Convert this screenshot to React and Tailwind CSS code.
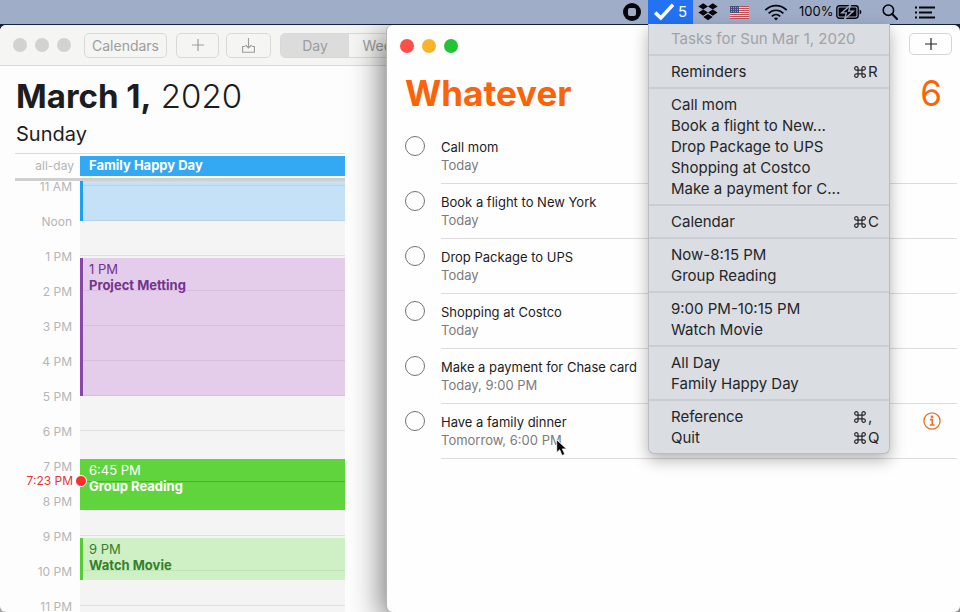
import React from "react";

const HOUR = 35;
const FIRST_HOUR = 11;

const hours = ["11 AM", "Noon", "1 PM", "2 PM", "3 PM", "4 PM", "5 PM", "6 PM", "7 PM", "8 PM", "9 PM", "10 PM", "11 PM"];

const events = [
  { start: 10.8, end: 12, tone: "bg-[#5ab5ff]/30 border-[#1da1f2]" },
  { start: 13, end: 17, time: "1 PM", title: "Project Metting", tone: "bg-[#c56fdc]/30 border-[#8a45a8] text-[#74338c]" },
  { start: 18.75, end: 20.25, time: "6:45 PM", title: "Group Reading", tone: "bg-[#5fd43d] border-[#5fd43d] text-white" },
  { start: 21, end: 22.25, time: "9 PM", title: "Watch Movie", tone: "bg-[#7fe35d]/30 border-[#55cc33] text-[#35802a]" },
];

const reminders = [
  { title: "Call mom", due: "Today" },
  { title: "Book a flight to New York", due: "Today" },
  { title: "Drop Package to UPS", due: "Today" },
  { title: "Shopping at Costco", due: "Today" },
  { title: "Make a payment for Chase card", due: "Today, 9:00 PM" },
  { title: "Have a family dinner", due: "Tomorrow, 6:00 PM", info: true },
];

const menuGroups = [
  [{ label: "Reminders", keys: "R" }],
  [
    { label: "Call mom" },
    { label: "Book a flight to New..." },
    { label: "Drop Package to UPS" },
    { label: "Shopping at Costco" },
    { label: "Make a payment for C..." },
  ],
  [{ label: "Calendar", keys: "C" }],
  [{ label: "Now-8:15 PM" }, { label: "Group Reading" }],
  [{ label: "9:00 PM-10:15 PM" }, { label: "Watch Movie" }],
  [{ label: "All Day" }, { label: "Family Happy Day" }],
  [{ label: "Reference", keys: "," }, { label: "Quit", keys: "Q" }],
];

function CommandIcon() {
  return (
    <svg className="h-3 w-3" viewBox="0 0 11 11" fill="none" stroke="currentColor" strokeWidth="1.1" aria-hidden="true">
      <path d="M3.7 3.7V2.2A1.55 1.55 0 1 0 2.2 3.7H8.8A1.55 1.55 0 1 0 7.3 2.2V8.8A1.55 1.55 0 1 0 8.8 7.3H2.2A1.55 1.55 0 1 0 3.7 8.8Z" />
    </svg>
  );
}

function DropboxIcon() {
  return (
    <svg className="h-[18px] w-5" viewBox="0 0 20 18" fill="#05070c" aria-hidden="true">
      <path d="M5.2 0.3 10 3.4 5.2 6.5 0.4 3.4ZM14.8 0.3 19.6 3.4 14.8 6.5 10 3.4ZM5.2 6.5 10 9.6 5.2 12.7 0.4 9.6ZM14.8 6.5 19.6 9.6 14.8 12.7 10 9.6ZM10 10.9 14.7 14 10 17.2 5.3 14Z" />
    </svg>
  );
}

function FlagIcon() {
  return (
    <svg className="h-[13px] w-[19px]" viewBox="0 0 19 13" aria-hidden="true">
      <rect width="19" height="13" fill="#e3d8dc" />
      {[0, 2, 4, 6, 8, 10, 12].map((y) => (
        <rect key={y} y={y} width="19" height="1" fill="#bf5058" />
      ))}
      <rect width="9" height="7" fill="#46507f" />
      {[1, 3, 5].map((y) =>
        [1, 3, 5, 7].map((x) => <rect key={`${x}-${y}`} x={x} y={y} width="0.8" height="0.8" fill="#c5c9dc" />)
      )}
    </svg>
  );
}

function WifiIcon() {
  return (
    <svg className="h-[17px] w-6" viewBox="0 0 24 17" fill="none" stroke="#05070c" strokeWidth="1.7" aria-hidden="true">
      <path d="M1.3 6.2C7.3 0.2 16.7 0.2 22.7 6.2" />
      <path d="M4.6 9.4C8.8 5.2 15.2 5.2 19.4 9.4" />
      <path d="M7.8 12.4C10.2 10 13.8 10 16.2 12.4" />
      <path d="M12 16.4 9.9 14.3Q12 12.7 14.1 14.3Z" fill="#05070c" stroke="none" />
    </svg>
  );
}

function BatteryIcon() {
  return (
    <svg className="h-[14px] w-[26px]" viewBox="0 0 26 14" aria-hidden="true">
      <rect x="0.8" y="0.8" width="21.4" height="12.4" rx="2.6" fill="none" stroke="#05070c" strokeWidth="1.4" />
      <rect x="2.6" y="2.6" width="17.8" height="8.8" rx="1" fill="#05070c" />
      <path d="M23.6 4.6Q25.4 5.4 25.4 7T23.6 9.4Z" fill="#05070c" />
      <path d="M14.6 0 5.6 7.9H10.4L8.6 14 17.4 6.1H12.6Z" fill="#05070c" stroke="#9fadc8" strokeWidth="1.3" />
    </svg>
  );
}

function SearchIcon() {
  return (
    <svg className="h-4 w-4" viewBox="0 0 16 16" fill="none" stroke="#05070c" strokeWidth="1.6" strokeLinecap="round" aria-hidden="true">
      <circle cx="6.4" cy="6.2" r="5.2" />
      <path d="M10.2 10 15 15" strokeWidth="2" />
    </svg>
  );
}

function ListIcon() {
  return (
    <svg className="h-[13px] w-5" viewBox="0 0 20 13" fill="#05070c" aria-hidden="true">
      <path d="M0 0.5H2V2.5H0ZM4 0.5H20V2.5H4ZM0 5.5H2V7.5H0ZM4 5.5H17V7.5H4ZM0 10.5H2V12.5H0ZM4 10.5H20V12.5H4Z" />
    </svg>
  );
}

function PlusIcon() {
  return (
    <svg className="h-3 w-3" viewBox="0 0 12 12" stroke="currentColor" strokeWidth="1.2" aria-hidden="true">
      <path d="M6 0V12M0 6H12" />
    </svg>
  );
}

function TasksMenu() {
  return (
    <div className="absolute left-0 top-full w-[242px] rounded-b-md border border-t-0 border-[#b9bdc1] bg-[#dadde1] pb-[5px] pt-1 text-[15px] leading-[21px] text-[#242629] shadow-[0_6px_16px_rgba(0,0,0,0.3)]">
      <p className="h-[21px] px-[22px] text-[#a0a3a7]">Tasks for Sun Mar 1, 2020</p>
      {menuGroups.map((group, i) => (
        <div key={i}>
          <div className="my-[5px] h-[2px] bg-[#cacdd1]" />
          {group.map((item) => (
            <button key={item.label} className="flex h-[21px] w-full items-center pl-[22px] pr-2 text-left">
              <span className="flex-1">{item.label}</span>
              {item.keys && (
                <span className="flex w-[27px] items-center gap-[2px]">
                  <CommandIcon />
                  {item.keys}
                </span>
              )}
            </button>
          ))}
        </div>
      ))}
    </div>
  );
}

function MenuBar() {
  return (
    <header className="relative z-20 flex h-6 shrink-0 items-center justify-end bg-[#9fadc8] pr-[25px] text-[#05070c]">
      <button aria-label="Stop recording" className="mr-[7px] flex h-[18px] w-[18px] items-center justify-center rounded-full bg-[#05070c]">
        <span className="h-2 w-2 rounded-[2px] bg-[#9fadc8]" />
      </button>
      <div className="relative h-6">
        <button className="flex h-6 w-[45px] items-center justify-center gap-1 bg-[#2372f3] text-[15px] text-white">
          <svg className="h-[18px] w-5" viewBox="0 0 20 18" fill="none" stroke="white" strokeWidth="3.6" aria-hidden="true">
            <path d="M1.2 9.6 6.8 15 19 1.6" />
          </svg>
          5
        </button>
        <TasksMenu />
      </div>
      <div className="ml-[5px] flex items-center">
        <DropboxIcon />
        <span className="ml-3 flex"><FlagIcon /></span>
        <span className="ml-[15px] flex"><WifiIcon /></span>
        <span className="ml-[11px] w-[34px] text-[13px]">100%</span>
        <span className="ml-[3px] flex"><BatteryIcon /></span>
        <button aria-label="Search" className="ml-5"><SearchIcon /></button>
        <button aria-label="Notifications" className="ml-[17px]"><ListIcon /></button>
      </div>
    </header>
  );
}

function CalendarWindow() {
  return (
    <section className="absolute inset-y-0 left-0 flex w-[560px] flex-col overflow-hidden rounded-md bg-[#fdfdfd]">
      <div className="flex h-[41px] shrink-0 items-center border-b border-[#d9d9d9] bg-[#f5f5f4] pl-[13px] text-[14px] text-[#9d9d9d]">
        <div className="flex gap-2">
          <span className="h-[14px] w-[14px] rounded-full bg-[#d2d2d2]" />
          <span className="h-[14px] w-[14px] rounded-full bg-[#d2d2d2]" />
          <span className="h-[14px] w-[14px] rounded-full bg-[#d2d2d2]" />
        </div>
        <button className="ml-[13px] h-[25px] w-[83px] rounded-[5px] border border-[#d9d9d9]">Calendars</button>
        <button aria-label="Add event" className="ml-[9px] flex h-[25px] w-[43px] items-center justify-center rounded-[5px] border border-[#d9d9d9]">
          <PlusIcon />
        </button>
        <button aria-label="Inbox" className="ml-[7px] flex h-[25px] w-[45px] items-center justify-center rounded-[5px] border border-[#d9d9d9]">
          <svg className="h-[15px] w-[13px]" viewBox="0 0 13 15" fill="none" stroke="currentColor" strokeWidth="1.1" aria-hidden="true">
            <path d="M3.2 8.5H0.6V14.2H12.4V8.5H9.8M6.5 0V10M3.5 7 6.5 10 9.5 7" />
          </svg>
        </button>
        <div className="ml-[9px] flex h-[25px] overflow-hidden rounded-[5px] border border-[#d9d9d9]">
          <button className="w-[68px] bg-[#dcdcdc]">Day</button>
          <button className="w-[64px]">Week</button>
        </div>
      </div>

      <div className="flex min-h-0 w-[345px] flex-1 flex-col text-[#1d1d1f]">
        <h1 className="mt-2 pl-4 text-[33px] leading-[44px]">
          <span className="font-bold">March 1,</span> <span className="font-light">2020</span>
        </h1>
        <p className="pl-4 text-[20px] leading-[32px]">Sunday</p>
        <div className="ml-[15px] mt-[3px] flex h-7 items-center border-b-[3px] border-t border-b-[#cfcfcf] border-t-[#dcdcdc] text-[12px]">
          <span className="w-[65px] pr-[6px] text-right text-[#b5b5b5]">all-day</span>
          <span className="h-5 flex-1 bg-[#33a9f4] pl-[9px] text-[13px] font-bold leading-[19px] text-white">Family Happy Day</span>
        </div>
        <div className="relative min-h-0 flex-1 overflow-hidden text-[12px]">
          <div className="-mt-3">
            {hours.map((label) => (
              <div key={label} className="flex h-[35px]">
                <span className="w-20 shrink-0 pr-2 text-right leading-[35px] text-[#b5b5b5]">{label}</span>
                <span className="flex flex-1 flex-col bg-[#f3f4f3]">
                  <span className="h-[17px] border-b border-[#dfe0df]" />
                </span>
              </div>
            ))}
          </div>
          {events.map((event) => (
            <article
              key={event.start}
              className={`absolute left-20 right-0 border-l-[3px] pl-[6px] pt-[3px] text-[13px] leading-4 ${event.tone}`}
              style={{ top: (event.start - FIRST_HOUR) * HOUR + 7, height: (event.end - event.start) * HOUR - 2 }}
            >
              <p className="relative z-10">{event.time}</p>
              <p className="relative z-10 font-bold">{event.title}</p>
            </article>
          ))}
          <div className="absolute left-0 right-0 flex h-4 items-center" style={{ top: (19.4 - FIRST_HOUR) * HOUR - 2 }}>
            <span className="w-[73px] text-right text-[#e03a30]">7:23 PM</span>
            <span className="z-10 ml-[2px] h-3 w-3 rounded-full border border-white bg-[#fb2d25]" />
            <span className="h-px flex-1 bg-[#4cae2b]" />
          </div>
        </div>
      </div>
    </section>
  );
}

function RemindersWindow() {
  return (
    <section className="absolute inset-y-0 left-[387px] right-0 rounded-md bg-[#fefefe] shadow-[-1px_0_0_#b5b5b5,-6px_8px_30px_rgba(0,0,0,0.5)]">
      <div className="flex h-[41px] items-center justify-between pl-[13px] pr-2">
        <div className="flex gap-2">
          <span className="h-[14px] w-[14px] rounded-full bg-[#fc4f4a]" />
          <span className="h-[14px] w-[14px] rounded-full bg-[#fbb429]" />
          <span className="h-[14px] w-[14px] rounded-full bg-[#22c337]" />
        </div>
        <button aria-label="New reminder" className="mb-[3px] flex h-[22px] w-[43px] items-center justify-center rounded-[5px] border border-[#d4d4d4] text-[#222]">
          <PlusIcon />
        </button>
      </div>
      <div className="flex h-[54px] items-center justify-between px-[18px] text-[35px] text-[#fb6309]">
        <h2 className="font-bold">Whatever</h2>
        <span>6</span>
      </div>
      <ul className="mt-[9px]">
        {reminders.map((item, i) => (
          <li key={item.title} className="flex h-[55px] pl-[18px] pr-[3px]">
            <input
              id={`reminder-${i}`}
              type="checkbox"
              className="mt-[7px] h-5 w-5 shrink-0 appearance-none rounded-full border border-[#747474]"
            />
            <div className="ml-4 flex flex-1 items-center justify-between border-b border-[#dcdcdc] pr-4">
              <div className="text-[13px] leading-[18px]">
                <label htmlFor={`reminder-${i}`} className="block text-[#1c1c1e]">{item.title}</label>
                <p className="text-[#7b7b7d]">{item.due}</p>
              </div>
              {item.info && (
                <button aria-label="Details" className="self-start pt-2">
                  <svg className="h-[18px] w-[18px]" viewBox="0 0 18 18" fill="none" stroke="#e8702a" strokeWidth="1.3" aria-hidden="true">
                    <circle cx="9" cy="9" r="8.1" />
                    <path d="M7 7.6H9.3V13M6.8 13H11.6" strokeWidth="1.6" />
                    <circle cx="9" cy="4.9" r="1.3" fill="#e8702a" stroke="none" />
                  </svg>
                </button>
              )}
            </div>
          </li>
        ))}
      </ul>
      <svg className="absolute left-[169px] top-[414px] h-[18px] w-3" viewBox="0 0 12 18" aria-hidden="true">
        <path d="M0.7 0.8V13.6L3.7 10.8 6 16.5 8.8 15.3 6.4 9.9H10.6Z" fill="#080808" stroke="white" strokeWidth="0.8" />
      </svg>
    </section>
  );
}

export default function App() {
  return (
    <main className="flex h-screen flex-col overflow-hidden bg-linear-to-b from-[#14233f] from-50% to-[#a5a5a3] font-['Inter','Liberation_Sans',sans-serif]">
      <MenuBar />
      <div className="relative mt-px min-h-0 flex-1">
        <CalendarWindow />
        <RemindersWindow />
      </div>
    </main>
  );
}
